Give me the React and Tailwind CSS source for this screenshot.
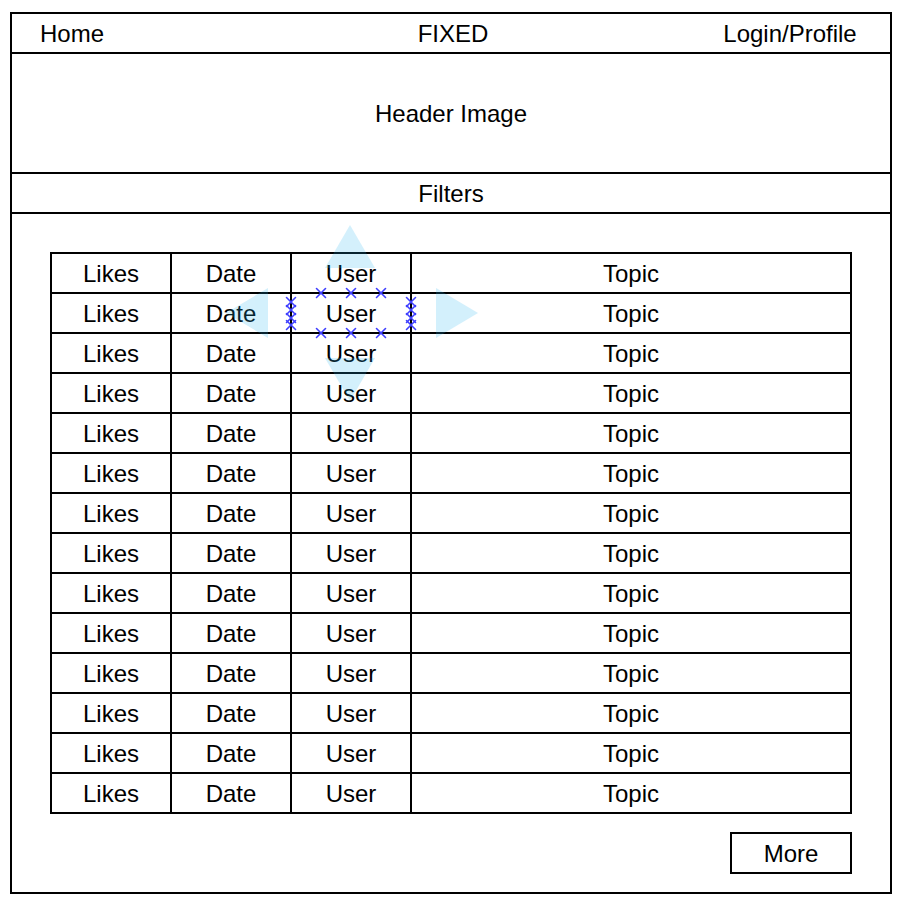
import React from "react";

const rows = Array.from({ length: 14 });

function XMark({ x, y, s = 4.5 }) {
  return (
    <g stroke="#3f3fff" strokeWidth="1.6" strokeLinecap="round">
      <line x1={x - s} y1={y - s} x2={x + s} y2={y + s} />
      <line x1={x - s} y1={y + s} x2={x + s} y2={y - s} />
    </g>
  );
}

const cell = "border-r-2 border-b-2 border-black flex items-center justify-center pt-[2px]";

export default function App() {
  return (
    <div
      className="relative w-[900px] h-[902px] bg-white pl-[10px] pt-[12px] text-black text-[24px] leading-none"
      style={{ fontFamily: '"Liberation Sans", Arial, sans-serif' }}
    >
      <div className="w-[882px] border-2 border-black flex flex-col">
        <div className="h-[40px] border-b-2 border-black grid grid-cols-[120px_1fr_120px] items-center pr-[40px] pt-[2px]">
          <div className="flex justify-center">Home</div>
          <div className="flex justify-center pl-[44px]">FIXED</div>
          <div className="flex justify-center whitespace-nowrap">Login/Profile</div>
        </div>
        <div className="h-[120px] border-b-2 border-black flex items-center justify-center pt-[2px]">
          Header Image
        </div>
        <div className="h-[40px] border-b-2 border-black flex items-center justify-center pt-[2px]">
          Filters
        </div>
        <div className="flex flex-col items-end pt-[38px] pb-[18px] pr-[38px] pl-[38px]">
          <div className="w-[802px] border-t-2 border-l-2 border-black">
            {rows.map((_, i) => (
              <div key={i} className="flex h-[40px]">
                <div className={"w-[120px] " + cell}>Likes</div>
                <div className={"w-[120px] " + cell}>Date</div>
                <div className={"w-[120px] " + cell}>User</div>
                <div className={"flex-1 " + cell}>Topic</div>
              </div>
            ))}
          </div>
          <div className="mt-[18px] w-[122px] h-[42px] border-2 border-black flex items-center justify-center pt-[2px]">
            More
          </div>
        </div>
      </div>

      <svg
        className="absolute left-0 top-0 pointer-events-none"
        width="900"
        height="902"
        viewBox="0 0 900 902"
      >
        <g fill="#29b6f2" opacity="0.2">
          <polygon points="350,225 325,268 375,268" />
          <polygon points="325,358 375,358 350,401" />
          <polygon points="226,313 268,288 268,338" />
          <polygon points="478,313 436,288 436,338" />
        </g>
        <XMark x={321} y={293} />
        <XMark x={351} y={293} />
        <XMark x={381} y={293} />
        <XMark x={321} y={333} />
        <XMark x={351} y={333} />
        <XMark x={381} y={333} />
        <XMark x={291} y={302} />
        <XMark x={291} y={310} />
        <XMark x={291} y={318} />
        <XMark x={291} y={325} />
        <XMark x={411} y={302} />
        <XMark x={411} y={310} />
        <XMark x={411} y={318} />
        <XMark x={411} y={325} />
      </svg>
    </div>
  );
}
